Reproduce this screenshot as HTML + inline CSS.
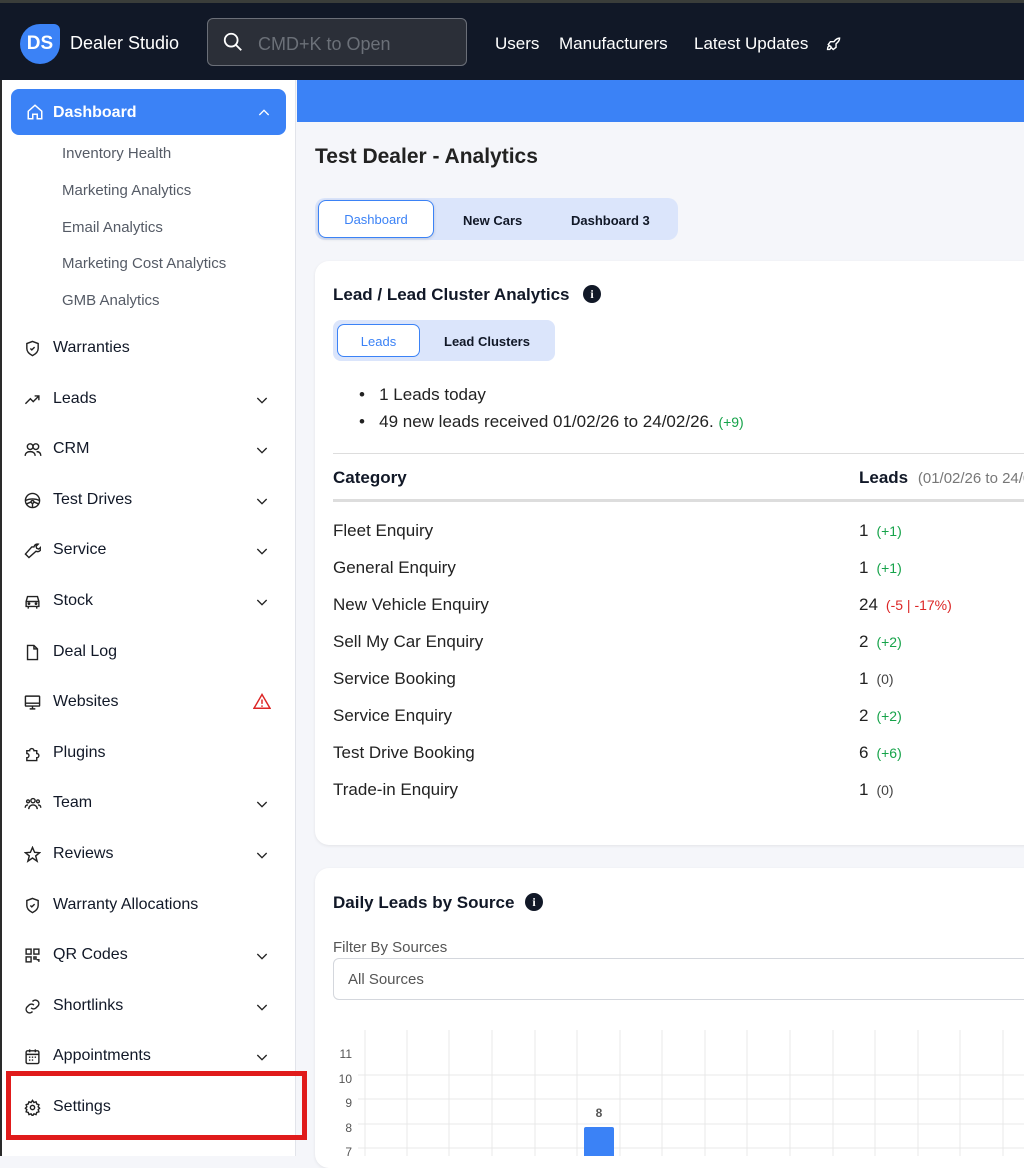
<!DOCTYPE html>
<html><head><meta charset="utf-8"><style>
*{box-sizing:border-box;margin:0;padding:0}
body{width:1024px;height:1156px;overflow:hidden;background:#f5f6fa;font-family:"Liberation Sans",sans-serif;color:#111827;position:relative}
.abs{position:absolute}
.top{left:0;top:0;width:1024px;height:80px;background:#111827;border-top:3px solid #3a3d3a}
.side{left:0;top:80px;width:296px;height:1076px;background:#fff;border-right:1px solid #e2e4ea;border-left:2px solid #2a2a2a}
.it{position:absolute;left:0;width:294px;height:24px;font-size:16px;line-height:24px}
.it .t{position:absolute;left:53px;top:0}
.it svg.i{position:absolute;left:24px;top:4px}
.it svg.c{position:absolute;left:254px;top:5px}
.sub{position:absolute;left:60px;font-size:15px;color:#555b66}
.card{background:#fff;border-radius:14px;box-shadow:0 1px 3px rgba(0,0,0,.08)}
.row{position:absolute;left:333px;font-size:17px;color:#222}
.num{position:absolute;left:859px;font-size:17px;color:#222}
.num small{font-size:14px;margin-left:8px}
.g{color:#16a34a}.r{color:#dc2626}.k{color:#444}
</style></head><body>
<div class="abs top">
 <div class="abs" style="left:20px;top:21px;width:40px;height:40px;background:#3b82f6;border-radius:20px 6px 20px 20px;color:#fff;font-weight:bold;font-size:19px;line-height:40px;text-align:center">DS</div>
 <div class="abs" style="left:70px;top:30px;color:#fff;font-size:18px">Dealer Studio</div>
 <div class="abs" style="left:207px;top:15px;width:260px;height:48px;border:1px solid #6b6f78;border-radius:6px;background:#2b2f38"></div>
 <svg class="abs" style="left:222px;top:28px" width="22" height="22" viewBox="0 0 24 24" fill="none" stroke="#fff" stroke-width="2"><circle cx="10" cy="10" r="7"/><path d="M15 15l6 6"/></svg>
 <div class="abs" style="left:258px;top:31px;color:#6b7078;font-size:18px">CMD+K to Open</div>
 <div class="abs" style="left:495px;top:31px;color:#fff;font-size:17px">Users</div>
 <div class="abs" style="left:559px;top:31px;color:#fff;font-size:17px">Manufacturers</div>
 <div class="abs" style="left:694px;top:31px;color:#fff;font-size:17px">Latest Updates</div>
 <svg class="abs" style="left:824px;top:33px" width="17" height="17" viewBox="0 0 24 24" fill="none" stroke="#fff" stroke-width="2"><path d="M5 19c0-3 1-5 3-5s3 2 0 5zM9 15l-3-3 3-4h5c3-4 6-5 8-5 0 2-1 5-5 8v5l-4 3-3-3"/></svg>
</div>
<div class="abs side">
 <div class="abs" style="left:9px;top:9px;width:275px;height:46px;background:#3b82f6;border-radius:8px"></div>
 <svg class="abs" style="left:24px;top:23px" width="18" height="18" viewBox="0 0 24 24" fill="none" stroke="#fff" stroke-width="2"><path d="M3 11l9-8 9 8v10h-6v-6H9v6H3z"/></svg>
 <div class="abs" style="left:51px;top:24px;color:#fff;font-weight:bold;font-size:16px">Dashboard</div>
 <svg class="abs" style="left:254px;top:25px" width="16" height="16" viewBox="0 0 24 24" fill="none" stroke="#fff" stroke-width="2"><path d="M5 15l7-7 7 7"/></svg>
 <div class="sub" style="top:65px">Inventory Health</div>
 <div class="sub" style="top:102px">Marketing Analytics</div>
 <div class="sub" style="top:139px">Email Analytics</div>
 <div class="sub" style="top:175px">Marketing Cost Analytics</div>
 <div class="sub" style="top:212px">GMB Analytics</div>
</div>
<div class="it" style="top:336px"><svg class="i" width="17" height="17" viewBox="0 0 24 24" fill="none" stroke="#222" stroke-width="2"><path d="M12 2l8 3v7c0 5-4 8-8 10-4-2-8-5-8-10V5z"/><path d="M9 12l2 2 4-4"/></svg><span class="t">Warranties</span></div>
<div class="it" style="top:387px"><svg class="i" width="17" height="17" viewBox="0 0 24 24" fill="none" stroke="#222" stroke-width="2"><path d="M2 18l7-7 4 4 8-8M15 7h6v6"/></svg><span class="t">Leads</span><svg class="c" width="16" height="16" viewBox="0 0 24 24" fill="none" stroke="#222" stroke-width="2"><path d="M5 9l7 7 7-7"/></svg></div>
<div class="it" style="top:437px"><svg class="i" width="18" height="17" viewBox="0 0 24 24" fill="none" stroke="#222" stroke-width="2"><circle cx="8" cy="8" r="4"/><circle cx="16" cy="8" r="4"/><path d="M1 21c0-4 3-6 7-6s7 2 7 6M17 15c4 0 6 2 6 6"/></svg><span class="t">CRM</span><svg class="c" width="16" height="16" viewBox="0 0 24 24" fill="none" stroke="#222" stroke-width="2"><path d="M5 9l7 7 7-7"/></svg></div>
<div class="it" style="top:488px"><svg class="i" width="17" height="17" viewBox="0 0 24 24" fill="none" stroke="#222" stroke-width="2"><circle cx="12" cy="12" r="10"/><circle cx="12" cy="14" r="2"/><path d="M2 12c6-3 14-3 20 0M12 16v6M10 14l-7 3M14 14l7 3"/></svg><span class="t">Test Drives</span><svg class="c" width="16" height="16" viewBox="0 0 24 24" fill="none" stroke="#222" stroke-width="2"><path d="M5 9l7 7 7-7"/></svg></div>
<div class="it" style="top:538px"><svg class="i" width="17" height="17" viewBox="0 0 24 24" fill="none" stroke="#222" stroke-width="2"><path d="M14 7a5 5 0 016-4l-3 3 1 3 3 1 3-3a5 5 0 01-7 6L7 22l-5-5 9-10z"/></svg><span class="t">Service</span><svg class="c" width="16" height="16" viewBox="0 0 24 24" fill="none" stroke="#222" stroke-width="2"><path d="M5 9l7 7 7-7"/></svg></div>
<div class="it" style="top:589px"><svg class="i" width="17" height="17" viewBox="0 0 24 24" fill="none" stroke="#222" stroke-width="2"><path d="M3 12l2-7h14l2 7v7H3zM3 12h18M6 19v3M18 19v3"/><circle cx="7" cy="15" r="1"/><circle cx="17" cy="15" r="1"/></svg><span class="t">Stock</span><svg class="c" width="16" height="16" viewBox="0 0 24 24" fill="none" stroke="#222" stroke-width="2"><path d="M5 9l7 7 7-7"/></svg></div>
<div class="it" style="top:640px"><svg class="i" width="17" height="17" viewBox="0 0 24 24" fill="none" stroke="#222" stroke-width="2"><path d="M5 2h9l5 5v15H5zM14 2v5h5"/></svg><span class="t">Deal Log</span></div>
<div class="it" style="top:690px"><svg class="i" width="17" height="17" viewBox="0 0 24 24" fill="none" stroke="#222" stroke-width="2"><rect x="2" y="3" width="20" height="14" rx="1"/><path d="M2 13h20M8 21h8M12 17v4"/></svg><span class="t">Websites</span><svg class="c" style="left:253px;top:3px" width="18" height="16" viewBox="0 0 24 22" fill="none" stroke="#dc2626" stroke-width="2"><path d="M12 2L1 21h22zM12 9v6M12 17v2"/></svg></div>
<div class="it" style="top:741px"><svg class="i" width="17" height="17" viewBox="0 0 24 24" fill="none" stroke="#222" stroke-width="2"><path d="M4 8h4a3 3 0 016 0h4v4a3 3 0 010 6v4H4v-4a3 3 0 000-6z"/></svg><span class="t">Plugins</span></div>
<div class="it" style="top:791px"><svg class="i" width="18" height="17" viewBox="0 0 24 24" fill="none" stroke="#222" stroke-width="2"><circle cx="12" cy="8" r="3"/><circle cx="5" cy="9" r="2"/><circle cx="19" cy="9" r="2"/><path d="M6 20c0-4 3-6 6-6s6 2 6 6M1 18c0-3 2-4 4-4M23 18c0-3-2-4-4-4"/></svg><span class="t">Team</span><svg class="c" width="16" height="16" viewBox="0 0 24 24" fill="none" stroke="#222" stroke-width="2"><path d="M5 9l7 7 7-7"/></svg></div>
<div class="it" style="top:842px"><svg class="i" width="17" height="17" viewBox="0 0 24 24" fill="none" stroke="#222" stroke-width="2"><path d="M12 2l3 7 7 .5-5.5 4.5 2 7.5L12 17l-6.5 4.5 2-7.5L2 9.5 9 9z"/></svg><span class="t">Reviews</span><svg class="c" width="16" height="16" viewBox="0 0 24 24" fill="none" stroke="#222" stroke-width="2"><path d="M5 9l7 7 7-7"/></svg></div>
<div class="it" style="top:893px"><svg class="i" width="17" height="17" viewBox="0 0 24 24" fill="none" stroke="#222" stroke-width="2"><path d="M12 2l8 3v7c0 5-4 8-8 10-4-2-8-5-8-10V5z"/><path d="M9 12l2 2 4-4"/></svg><span class="t">Warranty Allocations</span></div>
<div class="it" style="top:943px"><svg class="i" width="17" height="17" viewBox="0 0 24 24" fill="none" stroke="#222" stroke-width="2"><rect x="3" y="3" width="7" height="7"/><rect x="14" y="3" width="7" height="7"/><rect x="3" y="14" width="7" height="7"/><path d="M14 14h3v3h-3zM18 18h3v3"/></svg><span class="t">QR Codes</span><svg class="c" width="16" height="16" viewBox="0 0 24 24" fill="none" stroke="#222" stroke-width="2"><path d="M5 9l7 7 7-7"/></svg></div>
<div class="it" style="top:994px"><svg class="i" width="17" height="17" viewBox="0 0 24 24" fill="none" stroke="#222" stroke-width="2"><path d="M10 14a5 5 0 007 0l3-3a5 5 0 00-7-7l-1 1M14 10a5 5 0 00-7 0l-3 3a5 5 0 007 7l1-1"/></svg><span class="t">Shortlinks</span><svg class="c" width="16" height="16" viewBox="0 0 24 24" fill="none" stroke="#222" stroke-width="2"><path d="M5 9l7 7 7-7"/></svg></div>
<div class="it" style="top:1044px"><svg class="i" width="17" height="17" viewBox="0 0 24 24" fill="none" stroke="#222" stroke-width="2"><rect x="3" y="4" width="18" height="18" rx="2"/><path d="M3 9h18M8 2v4M16 2v4M7 13h2M11 13h2M15 13h2M7 17h2M11 17h2"/></svg><span class="t">Appointments</span><svg class="c" width="16" height="16" viewBox="0 0 24 24" fill="none" stroke="#222" stroke-width="2"><path d="M5 9l7 7 7-7"/></svg></div>
<div class="it" style="top:1095px"><svg class="i" width="17" height="17" viewBox="0 0 24 24" fill="none" stroke="#222" stroke-width="2"><circle cx="12" cy="12" r="3"/><path d="M12 2l2 3 3-1 1 3 3 1-1 3 2 2-2 2 1 3-3 1-1 3-3-1-2 3-2-3-3 1-1-3-3-1 1-3-2-2 2-2-1-3 3-1 1-3 3 1z"/></svg><span class="t">Settings</span></div>
<div class="abs" style="left:6px;top:1071px;width:301px;height:69px;border:5px solid #e01b1b"></div>

<div class="abs" style="left:297px;top:80px;width:727px;height:42px;background:#3b82f6"></div>
<div class="abs" style="left:315px;top:145px;font-size:21px;font-weight:bold;color:#222">Test Dealer - Analytics</div>
<div class="abs" style="left:315px;top:198px;width:363px;height:42px;background:#dbe5fb;border-radius:10px"></div>
<div class="abs" style="left:318px;top:200px;width:116px;height:38px;background:#fff;border:1px solid #3b82f6;border-radius:8px;color:#3b82f6;font-size:13px;line-height:38px;text-align:center;box-shadow:0 1px 3px rgba(0,0,0,.15)">Dashboard</div>
<div class="abs" style="left:463px;top:213px;font-size:13px;font-weight:bold">New Cars</div>
<div class="abs" style="left:571px;top:213px;font-size:13px;font-weight:bold">Dashboard 3</div>

<div class="abs card" style="left:315px;top:261px;width:730px;height:584px"></div>
<div class="abs" style="left:333px;top:285px;font-size:17px;font-weight:bold">Lead / Lead Cluster Analytics</div>
<div class="abs" style="left:583px;top:285px;width:18px;height:18px;border-radius:9px;background:#111827;color:#fff;font-size:12px;font-weight:bold;text-align:center;line-height:18px;font-family:'Liberation Serif',serif">i</div>
<div class="abs" style="left:333px;top:320px;width:222px;height:41px;background:#dbe5fb;border-radius:8px"></div>
<div class="abs" style="left:337px;top:324px;width:83px;height:33px;background:#fff;border:1px solid #3b82f6;border-radius:7px;color:#3b82f6;font-size:13px;line-height:33px;text-align:center">Leads</div>
<div class="abs" style="left:444px;top:334px;font-size:13px;font-weight:bold">Lead Clusters</div>
<div class="abs" style="left:359px;top:385px;font-size:17px;color:#222">•&nbsp;&nbsp; 1 Leads today</div>
<div class="abs" style="left:359px;top:412px;font-size:17px;color:#222">•&nbsp;&nbsp; 49 new leads received 01/02/26 to 24/02/26. <span class="g" style="font-size:14px">(+9)</span></div>
<div class="abs" style="left:333px;top:453px;width:691px;height:1px;background:#ddd"></div>
<div class="abs" style="left:333px;top:468px;font-size:17px;font-weight:bold">Category</div>
<div class="abs" style="left:859px;top:468px;font-size:17px;font-weight:bold;white-space:nowrap">Leads <span style="font-weight:normal;color:#777;font-size:15px;margin-left:5px">(01/02/26 to 24/02/26)</span></div>
<div class="abs" style="left:333px;top:499px;width:691px;height:3px;background:#ddd"></div>
<div class="row" style="top:521px">Fleet Enquiry</div><div class="num" style="top:521px">1<small class="g">(+1)</small></div>
<div class="row" style="top:558px">General Enquiry</div><div class="num" style="top:558px">1<small class="g">(+1)</small></div>
<div class="row" style="top:595px">New Vehicle Enquiry</div><div class="num" style="top:595px">24<small class="r">(-5 | -17%)</small></div>
<div class="row" style="top:632px">Sell My Car Enquiry</div><div class="num" style="top:632px">2<small class="g">(+2)</small></div>
<div class="row" style="top:669px">Service Booking</div><div class="num" style="top:669px">1<small class="k">(0)</small></div>
<div class="row" style="top:706px">Service Enquiry</div><div class="num" style="top:706px">2<small class="g">(+2)</small></div>
<div class="row" style="top:743px">Test Drive Booking</div><div class="num" style="top:743px">6<small class="g">(+6)</small></div>
<div class="row" style="top:780px">Trade-in Enquiry</div><div class="num" style="top:780px">1<small class="k">(0)</small></div>

<div class="abs card" style="left:315px;top:868px;width:730px;height:300px"></div>
<div class="abs" style="left:333px;top:893px;font-size:17px;font-weight:bold">Daily Leads by Source</div>
<div class="abs" style="left:525px;top:893px;width:18px;height:18px;border-radius:9px;background:#111827;color:#fff;font-size:12px;font-weight:bold;text-align:center;line-height:18px;font-family:'Liberation Serif',serif">i</div>
<div class="abs" style="left:333px;top:939px;font-size:15px;color:#555">Filter By Sources</div>
<div class="abs" style="left:333px;top:958px;width:700px;height:42px;border:1px solid #d4d7dd;border-radius:6px;background:#fff"></div>
<div class="abs" style="left:348px;top:971px;font-size:15px;color:#555">All Sources</div>
<svg class="abs" style="left:330px;top:1020px" width="694" height="136">
 <g stroke="#e8e8e8" stroke-width="1">
  <path d="M35 10V136M77 10V136M119 10V136M162 10V136M205 10V136M247 10V136M290 10V136M332 10V136M375 10V136M417 10V136M460 10V136M503 10V136M545 10V136M588 10V136M630 10V136M673 10V136"/>
  <path d="M28 55H694M28 79H694M28 104H694M28 128H694"/>
 </g>
 <g font-family="Liberation Sans" font-size="12" fill="#555" text-anchor="end">
  <text x="22" y="38">11</text><text x="22" y="63">10</text><text x="22" y="87">9</text><text x="22" y="112">8</text><text x="22" y="136">7</text>
 </g>
 <rect x="254" y="107" width="30" height="40" rx="2" fill="#3b82f6"/>
 <text x="269" y="97" font-family="Liberation Sans" font-size="12" font-weight="bold" fill="#555" text-anchor="middle">8</text>
</svg>
</body></html>
